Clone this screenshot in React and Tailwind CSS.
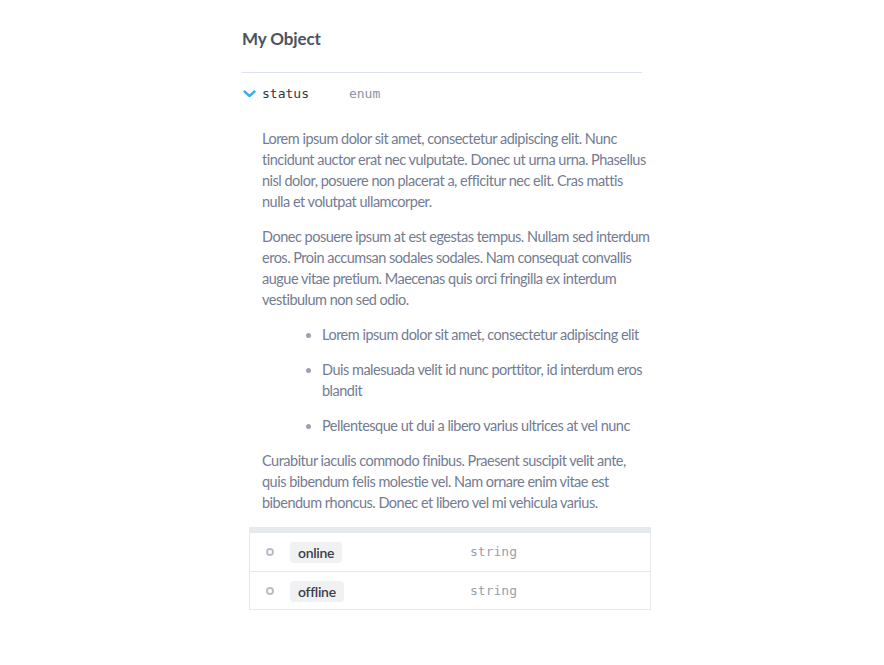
import React from 'react'

const values = [
  { name: 'online', type: 'string' },
  { name: 'offline', type: 'string' },
]

export default function App(){
  return (
    <div className="min-h-screen bg-white font-['Lato',_'Noto_Sans',_sans-serif]">
      <div className="mx-auto w-[400px] pt-[26px]">
        <h2 className="text-[17px] leading-[26px] font-bold tracking-[-0.1px] text-[#4b5260]">My Object</h2>

        <div className="mt-[20px] border-t border-[#dde3ea]" />

        <div className="flex h-[42px] items-center">
          <svg className="ml-[1px] h-[8px] w-[13px] text-[#3fb0e8]" viewBox="0 0 13 8" fill="none">
            <path d="M1.5 1.5 L6.5 6 L11.5 1.5" stroke="currentColor" strokeWidth="2.4" strokeLinecap="round" strokeLinejoin="round" />
          </svg>
          <span className="ml-[6px] font-['DejaVu_Sans_Mono',_monospace] text-[13px] text-[#33373f]">status</span>
          <span className="ml-[40px] font-['DejaVu_Sans_Mono',_monospace] text-[13px] text-[#8d93a0]">enum</span>
        </div>

        <div className="ml-5 mt-[13px] w-[400px] whitespace-nowrap text-[14.5px] leading-[21px] tracking-[-0.5px] text-[#737c92]">
          <p>
            Lorem ipsum dolor sit amet, consectetur adipiscing elit. Nunc<br />
            tincidunt auctor erat nec vulputate. Donec ut urna urna. Phasellus<br />
            nisl dolor, posuere non placerat a, efficitur nec elit. Cras mattis<br />
            nulla et volutpat ullamcorper.
          </p>
          <p className="mt-[14px]">
            Donec posuere ipsum at est egestas tempus. Nullam sed interdum<br />
            eros. Proin accumsan sodales sodales. Nam consequat convallis<br />
            augue vitae pretium. Maecenas quis orci fringilla ex interdum<br />
            vestibulum non sed odio.
          </p>
          <ul className="mt-[14px] ml-[60px] list-disc space-y-[14px] marker:text-[#9aa1b0]">
            <li>Lorem ipsum dolor sit amet, consectetur adipiscing elit</li>
            <li>Duis malesuada velit id nunc porttitor, id interdum eros<br />blandit</li>
            <li>Pellentesque ut dui a libero varius ultrices at vel nunc</li>
          </ul>
          <p className="mt-[14px]">
            Curabitur iaculis commodo finibus. Praesent suscipit velit ante,<br />
            quis bibendum felis molestie vel. Nam ornare enim vitae est<br />
            bibendum rhoncus. Donec et libero vel mi vehicula varius.
          </p>
        </div>

        <div className="ml-[7px] mt-[14px] w-[402px] border border-t-0 border-[#e6e9ed]">
          <div className="h-[6px] bg-[#e6e9ed]" />
          {values.map((v, i) => (
            <div key={v.name} className={`flex h-[38px] items-center ${i > 0 ? 'border-t border-[#e6e9ed]' : ''}`}>
              <span className="ml-[16px] h-[8px] w-[8px] rounded-full border-2 border-[#b9bec7]" />
              <span className="ml-[16px] w-[180px]">
                <span className="inline-block rounded-[4px] bg-[#f0f1f3] px-[8px] py-[1px] text-[14px] leading-[19px] font-semibold tracking-[-0.3px] text-[#3b3f48]">{v.name}</span>
              </span>
              <span className="font-['DejaVu_Sans_Mono',_monospace] text-[13px] text-[#9aa0ab]">{v.type}</span>
            </div>
          ))}
        </div>
      </div>
    </div>
  )
}
